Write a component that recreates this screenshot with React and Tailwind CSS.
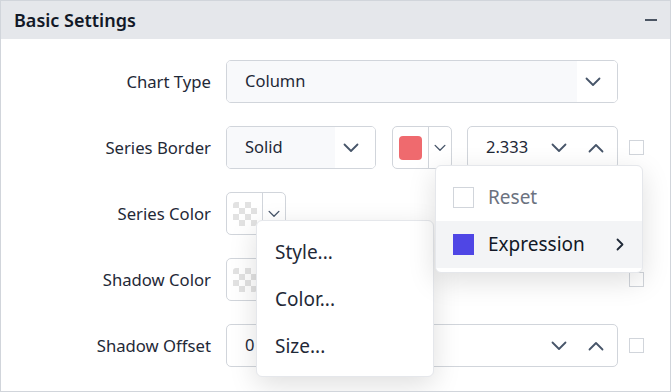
import React from 'react';

const font = { fontFamily: '"Noto Sans", "Open Sans", sans-serif' };

// Chevron drawn as a simple polyline
const Chevron = ({ up = false, w = 16, className = '' }) => (
    <svg width={w} height={w / 2 + 2} viewBox="0 0 16 10" className={className}>
        <path
            d={up ? 'M1.5 8.5 L8 2 L14.5 8.5' : 'M1.5 1.5 L8 8 L14.5 1.5'}
            fill="none"
            stroke="#475569"
            strokeWidth="1.8"
            strokeLinecap="round"
            strokeLinejoin="round"
        />
    </svg>
);

const Checker = () => (
    <div className="grid grid-cols-4 w-[24px] h-[24px] rounded-[3px] overflow-hidden">
        {[...Array(16)].map((_, i) => {
            const r = Math.floor(i / 4);
            const c = i % 4;
            return (
                <div
                    key={i}
                    className={(r + c) % 2 === 0 ? 'bg-[#e2e2e2]' : 'bg-white'}
                />
            );
        })}
    </div>
);

const ColorPicker = ({ swatch }) => (
    <div className="flex h-[43px] w-[60px] border border-[#d1d5db] rounded-[5px] bg-white">
        <div className="w-[35px] flex items-center justify-center">
            {swatch === 'checker' ? (
                <Checker />
            ) : (
                <div className="w-[23px] h-[24px] rounded-[4px] bg-[#ef6a6e]" />
            )}
        </div>
        <div className="w-px bg-[#d1d5db]" />
        <div className="flex-1 flex items-center justify-center">
            <Chevron w={12} />
        </div>
    </div>
);

const Select = ({ value, width }) => (
    <div className={`flex h-[43px] border border-[#d1d5db] rounded-[5px] overflow-hidden ${width}`}>
        <div className="flex-1 flex items-center pl-[18px] bg-[#f8f9fb] text-[16.5px] text-[#1f2937]">
            {value}
        </div>
        <div className="w-[40px] flex items-center pl-[8px] bg-white">
            <Chevron />
        </div>
    </div>
);

const NumberBox = ({ value, width }) => (
    <div className={`flex items-center h-[43px] border border-[#d1d5db] rounded-[5px] bg-white pl-[18px] pr-[13px] ${width}`}>
        <span className="text-[16.5px] text-[#1f2937]">{value}</span>
        <div className="ml-auto flex items-center gap-[21px]">
            <Chevron />
            <Chevron up />
        </div>
    </div>
);

const Check = () => <div className="w-[15px] h-[15px] border border-[#d1d5db] bg-white" />;

const Row = ({ label, children }) => (
    <div className="flex items-center h-[43px] gap-[15px]">
        <div className="w-[210px] text-right text-[16.7px] text-[#1f2937]">{label}</div>
        {children}
    </div>
);

export default function App() {
    return (
        <div style={font} className="relative w-[671px] h-[392px] border border-[#d1d5db] bg-white overflow-hidden">
            <div className="h-[38px] bg-[#e5e7eb] flex items-center justify-between pl-[13px] pr-[13px]">
                <span className="text-[18px] font-semibold text-[#111827]">Basic Settings</span>
                <div className="w-[12px] h-[2px] bg-[#4b5563]" />
            </div>

            <div className="pt-[21px] flex flex-col gap-[23px]">
                <Row label="Chart Type">
                    <Select value="Column" width="w-[392px]" />
                </Row>
                <Row label="Series Border">
                    <Select value="Solid" width="w-[150px]" />
                    <div className="ml-px">
                        <ColorPicker swatch="red" />
                    </div>
                    <NumberBox value="2.333" width="w-[151px]" />
                    <div className="ml-[-4px]"><Check /></div>
                </Row>
                <Row label="Series Color">
                    <ColorPicker swatch="checker" />
                </Row>
                <Row label="Shadow Color">
                    <ColorPicker swatch="checker" />
                    <div className="ml-[328px]"><Check /></div>
                </Row>
                <Row label="Shadow Offset">
                    <NumberBox value="0" width="w-[392px]" />
                    <div className="ml-[-4px]"><Check /></div>
                </Row>
            </div>

            {/* context menu */}
            <div className="absolute left-[255px] top-[219px] w-[178px] h-[157px] bg-white border border-[#e5e7eb] rounded-[6px] shadow-[0_8px_28px_rgba(0,0,0,0.13)] pt-[8px]">
                {['Style...', 'Color...', 'Size...'].map((item) => (
                    <div key={item} className="h-[47px] flex items-center pl-[18px] text-[19px] text-[#1f2937]">
                        {item}
                    </div>
                ))}
            </div>

            {/* submenu */}
            <div className="absolute left-[434px] top-[164px] w-[208px] h-[108px] bg-white border border-[#e5e7eb] rounded-[6px] shadow-[0_8px_28px_rgba(0,0,0,0.13)] pt-[8px] overflow-hidden">
                <div className="h-[47px] flex items-center pl-[17px] gap-[14px] text-[19px] text-[#6b7280]">
                    <div className="w-[21px] h-[21px] border border-[#d1d5db] bg-white" />
                    <span>Reset</span>
                </div>
                <div className="h-[47px] flex items-center pl-[17px] pr-[18px] gap-[14px] text-[19px] text-[#111827] bg-[#f3f4f6]">
                    <div className="w-[21px] h-[21px] bg-[#4f46e5]" />
                    <span>Expression</span>
                    <svg width="8" height="13" viewBox="0 0 8 13" className="ml-auto">
                        <path d="M1.5 1.5 L6.5 6.5 L1.5 11.5" fill="none" stroke="#1f2937" strokeWidth="1.8" strokeLinecap="round" strokeLinejoin="round" />
                    </svg>
                </div>
            </div>
        </div>
    );
}
